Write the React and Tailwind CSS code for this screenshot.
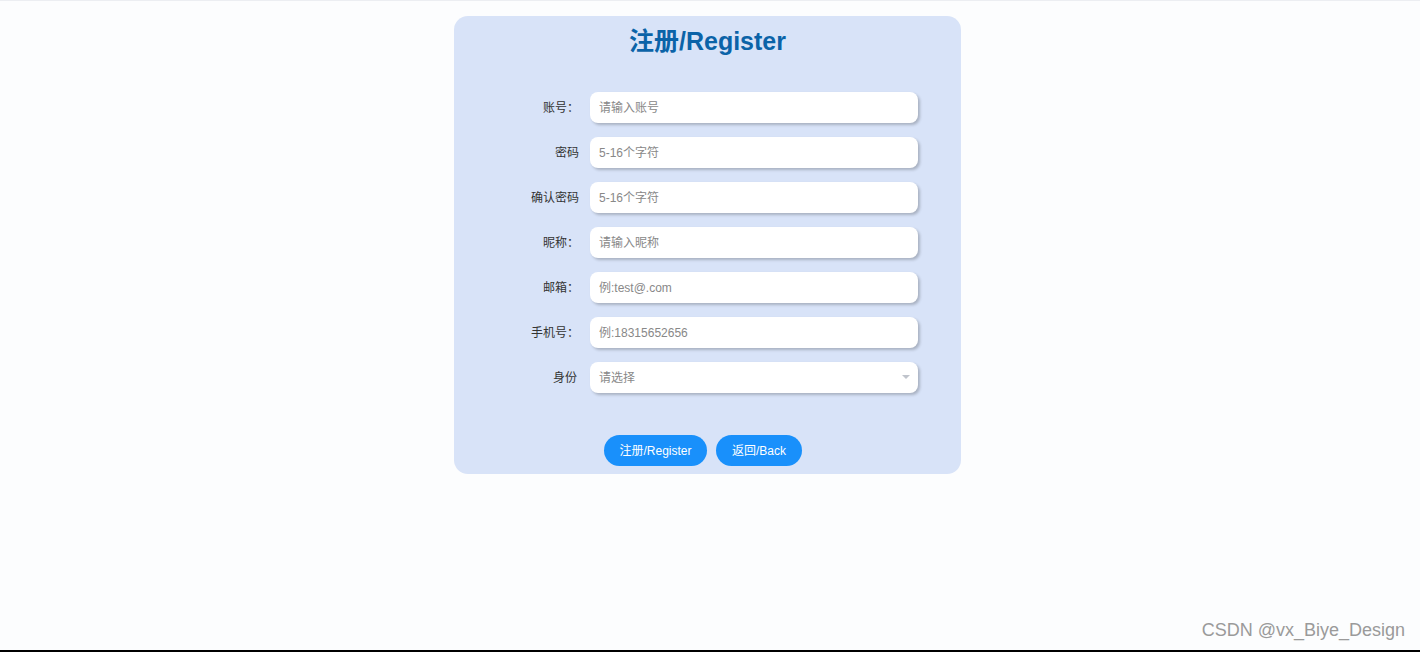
import React from 'react';

const fields = [
  { label: '账号：', placeholder: '请输入账号' },
  { label: '密码', placeholder: '5-16个字符' },
  { label: '确认密码', placeholder: '5-16个字符' },
  { label: '昵称：', placeholder: '请输入昵称' },
  { label: '邮箱：', placeholder: '例:test@.com' },
  { label: '手机号：', placeholder: '例:18315652656' },
];

const font = { fontFamily: '"Liberation Sans", Arial, "Noto Sans CJK SC", sans-serif' };

const App = () => {
  return (
    <div style={font} className="relative h-[652px] w-full overflow-hidden bg-[#fcfdfe] border-t border-[#eceef2]">
      <div className="flex justify-center pr-[5px]">
        <div className="mt-[15px] w-[507px] rounded-[14px] bg-[#d8e3f8] pb-[8px]">
          <h1 className="pt-[10px] text-center text-[25px] font-bold leading-[30px] text-[#0b63a8]">注册/Register</h1>

          <div className="mt-[36px] flex flex-col gap-[14px]">
            {fields.map((f, i) => (
              <div key={i} className="flex items-center">
                <label className="w-[125px] text-right text-[12px] text-[#333]">{f.label}</label>
                <input
                  placeholder={f.placeholder}
                  className="ml-[11px] h-[31px] w-[328px] rounded-[8px] bg-white pl-[9px] text-[12px] text-[#333] outline-none placeholder:text-[#888] shadow-[2px_2px_3px_rgba(0,0,0,0.22)]"
                />
              </div>
            ))}
            <div className="flex items-center">
              <label className="w-[123px] text-right text-[12px] text-[#333]">身份</label>
              <div className="relative ml-[13px] flex h-[31px] w-[328px] items-center rounded-[8px] bg-white pl-[9px] text-[12px] text-[#888] shadow-[2px_2px_3px_rgba(0,0,0,0.22)]">
                请选择
                <span className="absolute right-[8px] top-[13px] h-0 w-0 border-x-[4px] border-t-[4px] border-x-transparent border-t-[#c0c4cc]" />
              </div>
            </div>
          </div>

          <div className="mt-[42px] flex gap-[9px] pl-[150px]">
            <button className="h-[31px] w-[103px] rounded-full bg-[#1990fb] text-[12px] text-white">注册/Register</button>
            <button className="h-[31px] w-[86px] rounded-full bg-[#1990fb] text-[12px] text-white">返回/Back</button>
          </div>
        </div>
      </div>

      <div className="absolute bottom-[8px] right-[15px] text-[18px] text-[#9a9a9a]">CSDN @vx_Biye_Design</div>
      <div className="absolute bottom-0 left-0 h-[2px] w-full bg-black" />
    </div>
  );
};

export default App;
